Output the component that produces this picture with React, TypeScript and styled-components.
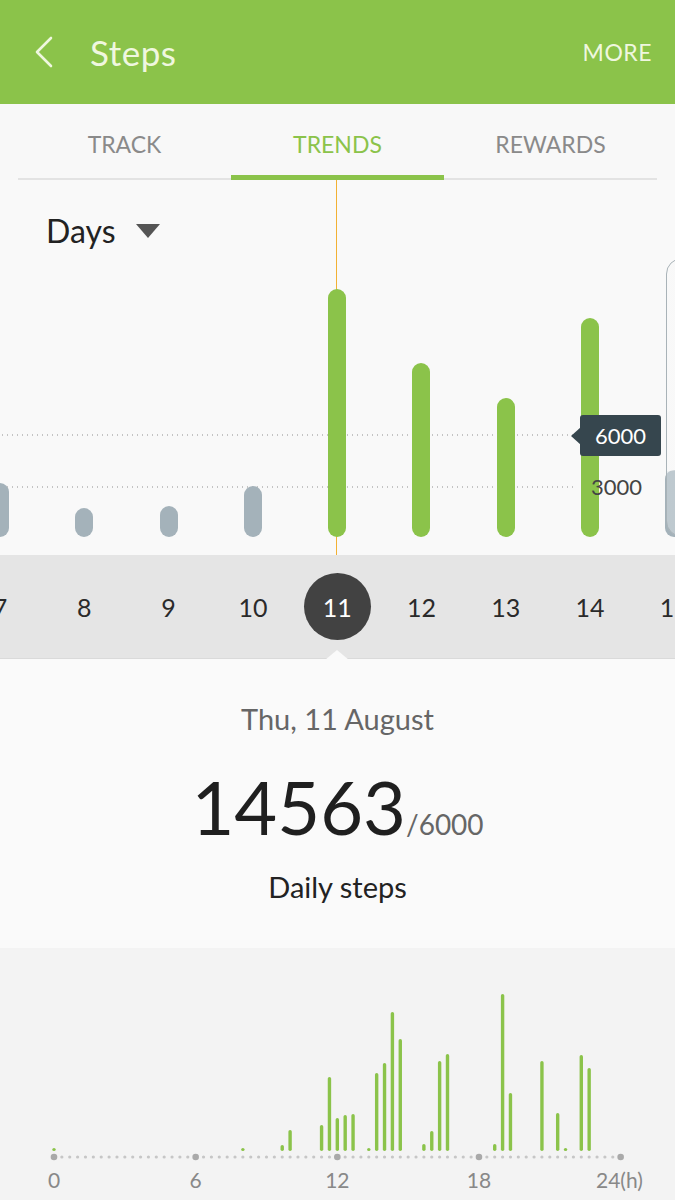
import React from 'react';
import styled, { createGlobalStyle } from 'styled-components';

const GREEN = '#8bc34a';
const COL = 84.3;
const STEP_SCALE = 102 / 6000;

const GlobalStyle = createGlobalStyle`
  body {
    margin: 0;
    font-family: Lato, "Noto Sans", sans-serif;
    background: #fafafa;
  }
`;

const Page = styled.div`
  width: 675px;
  height: 1200px;
  overflow: hidden;
  display: flex;
  flex-direction: column;

  & > * {
    flex-shrink: 0;
  }
`;

const AppBar = styled.header`
  height: 104px;
  background: ${GREEN};
  display: flex;
  align-items: center;
  padding: 0 23px 0 34px;
  color: #eff7df;
`;

const BackButton = styled.button`
  background: transparent;
  border: none;
  padding: 0;
  width: 22px;
  height: 32px;
  display: flex;
  align-items: center;
`;

const Title = styled.h1`
  margin: 0 0 0 34px;
  font-size: 35px;
  font-weight: 400;
  flex: 1;
  letter-spacing: 0.5px;
`;

const MoreLink = styled.span`
  font-size: 23px;
  letter-spacing: 0.5px;
`;

const Tabs = styled.nav`
  height: 76px;
  background: #f8f8f8;
  display: grid;
  grid-template-columns: repeat(3, 1fr);
  padding: 0 18px;
`;

const Tab = styled.div<{ $active?: boolean }>`
  padding-top: 26px;
  line-height: 28px;
  text-align: center;
  font-size: 23px;
  color: ${(p) => (p.$active ? GREEN : '#8a8a8a')};
  border-bottom: ${(p) => (p.$active ? `5px solid ${GREEN}` : '2px solid #e3e3e3')};
  box-sizing: border-box;
  height: 76px;
`;

const ChartArea = styled.section`
  position: relative;
  height: 375px;
  background: #f9f9f9;
  display: flex;
  flex-direction: column;
  overflow: hidden;
`;

const FocusLine = styled.div`
  position: absolute;
  left: 336px;
  top: 0;
  bottom: 0;
  width: 1px;
  background: #f2b134;
`;

const PeriodSelect = styled.div`
  display: flex;
  align-items: center;
  gap: 20px;
  padding: 36px 0 0 46px;
  font-size: 32px;
  line-height: 30px;
  color: #222;
`;

const Plot = styled.div`
  position: relative;
  flex: 1;
  display: flex;
  align-items: flex-end;
  padding-bottom: 18px;
  margin-left: -${COL / 2}px;
`;

const GridLine = styled.div<{ $bottom: number }>`
  position: absolute;
  left: ${COL / 2}px;
  width: 577px;
  bottom: ${(p) => p.$bottom}px;
  height: 2px;
  background-image: radial-gradient(circle, #c4c4c4 0.9px, transparent 1.1px);
  background-size: 5px 2px;
`;

const BarSlot = styled.div`
  position: relative;
  width: ${COL}px;
  flex: none;
  display: flex;
  justify-content: center;
`;

const Bar = styled.div<{ $h: number; $goal: boolean }>`
  width: 18px;
  height: ${(p) => p.$h}px;
  border-radius: 9px;
  background: ${(p) => (p.$goal ? GREEN : '#a4b2ba')};
`;

const GoalBadge = styled.div`
  position: absolute;
  left: 580px;
  top: 235px;
  width: 81px;
  height: 41px;
  border-radius: 3px;
  background: #36464e;
  color: #fff;
  font-size: 22px;
  display: flex;
  align-items: center;
  justify-content: center;

  &::before {
    content: '';
    position: absolute;
    left: -9px;
    top: 12px;
    border-style: solid;
    border-width: 9px 10px 9px 0;
    border-color: transparent #36464e transparent transparent;
  }
`;

const AxisLabel = styled.span`
  position: absolute;
  left: 591px;
  top: 293px;
  font-size: 22px;
  color: #444;
`;

const PeekCard = styled.div`
  position: absolute;
  left: 666px;
  top: 78px;
  width: 40px;
  height: 279px;
  box-sizing: border-box;
  border: 1.5px solid #a9b3b8;
  border-radius: 16px 0 0 16px;
  background: linear-gradient(
    to bottom,
    rgba(248, 248, 248, 0.5) 0,
    rgba(248, 248, 248, 0.5) 212px,
    rgba(222, 229, 233, 0.45) 212px
  );
`;

const DateStrip = styled.div`
  height: 104px;
  background: #e5e5e5;
  display: flex;
  align-items: center;
  margin-left: -${COL / 2}px;
  border-bottom: 1px solid #dadada;
  box-sizing: border-box;
`;

const DayCell = styled.div<{ $selected?: boolean }>`
  position: relative;
  width: ${COL}px;
  height: 104px;
  flex: none;
  display: flex;
  align-items: center;
  justify-content: center;
  font-size: 25px;
  color: #2a2a2a;

  span {
    width: 67px;
    height: 67px;
    border-radius: 50%;
    display: flex;
    align-items: center;
    justify-content: center;
    background: ${(p) => (p.$selected ? '#424242' : 'transparent')};
    color: ${(p) => (p.$selected ? '#fff' : '#2a2a2a')};
  }

  &::after {
    content: '';
    display: ${(p) => (p.$selected ? 'block' : 'none')};
    position: absolute;
    bottom: -1px;
    left: 50%;
    margin-left: -12px;
    border-style: solid;
    border-width: 0 12px 10px 12px;
    border-color: transparent transparent #fafafa transparent;
  }
`;

const Summary = styled.section`
  height: 289px;
  background: #fafafa;
  display: flex;
  flex-direction: column;
  align-items: center;
  padding-top: 44px;
  box-sizing: border-box;
`;

const DateText = styled.div`
  font-size: 29px;
  line-height: 32px;
  color: #666;
`;

const Total = styled.div`
  margin-top: 32px;
  line-height: 80px;
`;

const TotalValue = styled.span`
  font-size: 74px;
  color: #1f1f1f;
`;

const TotalGoal = styled.span`
  font-size: 28px;
  color: #666;
`;

const Caption = styled.div`
  margin-top: 2px;
  font-size: 29px;
  line-height: 32px;
  color: #222;
`;

const Hourly = styled.section`
  height: 252px;
  background: #f3f3f3;

  svg {
    display: block;
  }
`;

const days = [
  { day: 7, steps: 3180 },
  { day: 8, steps: 1710 },
  { day: 9, steps: 1830 },
  { day: 10, steps: 3000 },
  { day: 11, steps: 14563 },
  { day: 12, steps: 10240 },
  { day: 13, steps: 8180 },
  { day: 14, steps: 12880 },
  { day: 15, steps: 3940 },
];

// 20-minute slots across the day -> bar height in px
const hourly: Record<number, number> = {
  0: 3, 24: 3, 29: 6, 30: 21, 34: 26, 35: 74, 36: 33, 37: 36, 38: 37,
  40: 3, 41: 78, 42: 88, 43: 139, 44: 112, 47: 7, 48: 20, 49: 90, 50: 97,
  56: 7, 57: 157, 58: 58, 62: 90, 64: 38, 65: 3, 67: 96, 68: 83,
};

function HourlyChart() {
  const x0 = 54;
  const dx = 7.87;
  const base = 203;
  const slots = Array.from({ length: 73 }, (_, i) => i);
  return (
    <svg width="675" height="252" viewBox="0 0 675 252">
      {slots.map((i) =>
        i % 18 === 0 ? (
          <circle key={i} cx={x0 + i * dx} cy={209} r={3.3} fill="#a9a9a9" />
        ) : (
          <circle key={i} cx={x0 + i * dx} cy={209} r={1.6} fill="#c6c6c6" />
        )
      )}
      {Object.entries(hourly).map(([slot, h]) => {
        const cx = x0 + Number(slot) * dx;
        const hh = Math.max(h, 3);
        return (
          <rect
            key={slot}
            x={cx - 1.7}
            y={base - hh}
            width={3.4}
            height={hh}
            rx={1.7}
            fill={GREEN}
          />
        );
      })}
      {['0', '6', '12', '18'].map((t, i) => (
        <text
          key={t}
          x={x0 + i * 18 * dx}
          y={240}
          fontSize="21"
          fill="#888"
          textAnchor="middle"
          fontFamily="Lato, sans-serif"
        >
          {t}
        </text>
      ))}
      <text x={596} y={240} fontSize="21" fill="#888" fontFamily="Lato, sans-serif">
        24(h)
      </text>
    </svg>
  );
}

function App() {
  return (
    <Page>
      <GlobalStyle />
      <AppBar>
        <BackButton aria-label="Back">
          <svg width="20" height="32" viewBox="0 0 20 32">
            <polyline
              points="17,2 3,16 17,30"
              fill="none"
              stroke="#eff7df"
              strokeWidth="2.6"
              strokeLinecap="round"
              strokeLinejoin="round"
            />
          </svg>
        </BackButton>
        <Title>{'Steps'}</Title>
        <MoreLink>{'MORE'}</MoreLink>
      </AppBar>

      <Tabs>
        <Tab>{'TRACK'}</Tab>
        <Tab $active>{'TRENDS'}</Tab>
        <Tab>{'REWARDS'}</Tab>
      </Tabs>

      <ChartArea>
        <FocusLine />
        <PeriodSelect>
          {'Days'}
          <svg width="24" height="15" viewBox="0 0 24 15">
            <polygon points="0,0 24,0 12,14" fill="#555" />
          </svg>
        </PeriodSelect>
        <Plot>
          <GridLine $bottom={119} />
          <GridLine $bottom={67} />
          {days.map((d) => (
            <BarSlot key={d.day}>
              <Bar $h={Math.round(d.steps * STEP_SCALE)} $goal={d.steps >= 6000} />
            </BarSlot>
          ))}
        </Plot>
        <AxisLabel>{'3000'}</AxisLabel>
        <GoalBadge>{'6000'}</GoalBadge>
        <PeekCard />
      </ChartArea>

      <DateStrip>
        {days.map((d) => (
          <DayCell key={d.day} $selected={d.day === 11}>
            <span>{d.day}</span>
          </DayCell>
        ))}
      </DateStrip>

      <Summary>
        <DateText>{'Thu, 11 August'}</DateText>
        <Total>
          <TotalValue>{'14563'}</TotalValue>
          <TotalGoal>{'/6000'}</TotalGoal>
        </Total>
        <Caption>{'Daily steps'}</Caption>
      </Summary>

      <Hourly>
        <HourlyChart />
      </Hourly>
    </Page>
  );
}

export default App;
